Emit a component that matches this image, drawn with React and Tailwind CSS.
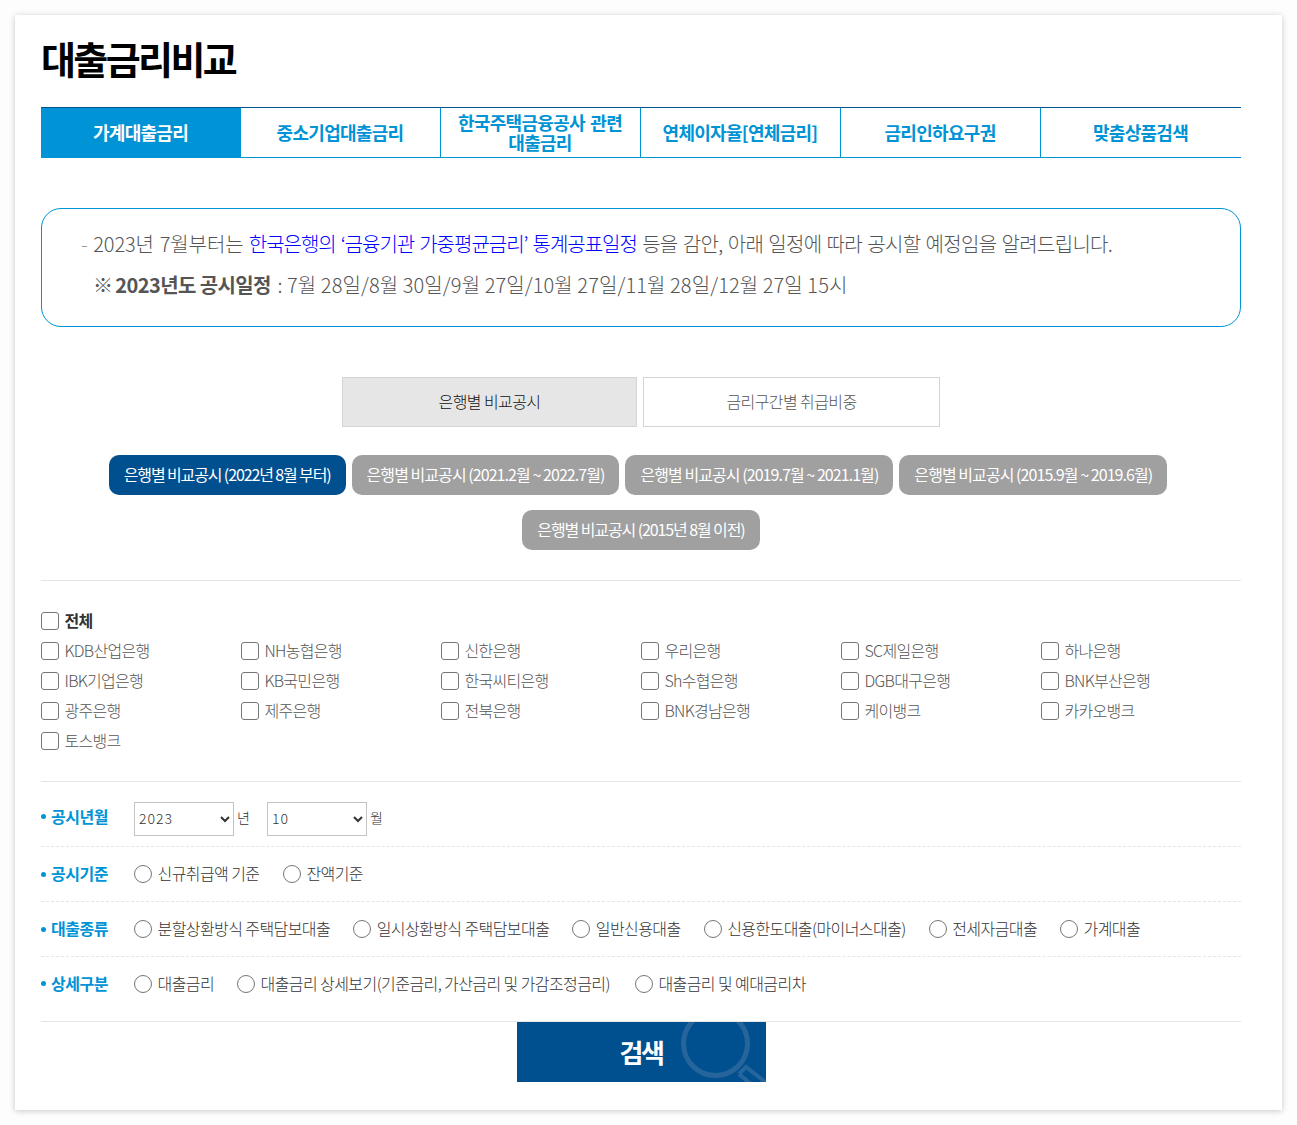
import React from 'react';

const FONT = "font-['Noto_Sans_CJK_KR','Noto_Sans',sans-serif]";

const tabs = ['가계대출금리', '중소기업대출금리', '한국주택금융공사 관련 대출금리', '연체이자율[연체금리]', '금리인하요구권', '맞춤상품검색'];

const pills = [
  { label: '은행별 비교공시 (2022년 8월 부터)', on: true },
  { label: '은행별 비교공시 (2021.2월 ~ 2022.7월)' },
  { label: '은행별 비교공시 (2019.7월 ~ 2021.1월)' },
  { label: '은행별 비교공시 (2015.9월 ~ 2019.6월)' },
];

const banks = [
  'KDB산업은행', 'NH농협은행', '신한은행', '우리은행', 'SC제일은행', '하나은행',
  'IBK기업은행', 'KB국민은행', '한국씨티은행', 'Sh수협은행', 'DGB대구은행', 'BNK부산은행',
  '광주은행', '제주은행', '전북은행', 'BNK경남은행', '케이뱅크', '카카오뱅크',
  '토스뱅크',
];

function Check({ label, bold }) {
  return (
    <label className="flex h-[30px] items-center">
      <input type="checkbox" className="h-[18px] w-[18px] appearance-none rounded-[3px] border border-[#767676] bg-white" />
      <span className={`ml-[5.5px] pb-[2px] text-[16px] tracking-[-0.7px] ${bold ? 'font-bold text-[#333]' : 'font-light text-[#555]'}`}>{label}</span>
    </label>
  );
}

function Radio({ label, gap }) {
  return (
    <label className={`flex items-center ${gap}`}>
      <input type="radio" className="h-[18px] w-[18px] appearance-none rounded-full border border-[#767676] bg-white" />
      <span className="ml-[5.5px] pb-[2px] text-[16px] font-light tracking-[-0.58px] text-[#333]">{label}</span>
    </label>
  );
}

function Row({ title, children, border = true, height, titlePad = 'pb-[2px]' }) {
  return (
    <div className={`flex items-center ${height} ${border ? 'border-b border-dashed border-[#e5e5e5]' : ''}`}>
      <div className={`flex w-[93px] items-center text-[16px] font-bold tracking-[-0.5px] text-[#0093d5] ${titlePad}`}>
        <span className="relative top-[1px] mr-[5px] h-[5px] w-[5px] rounded-full bg-[#0093d5]" />
        {title}
      </div>
      {children}
    </div>
  );
}

export default function App() {
  return (
    <div className={`bg-[#fdfdfd] px-[15px] pb-[15px] pt-[15px] ${FONT}`}>
      <div className="h-[1095px] w-[1267px] bg-white pl-[26px] pr-[41px] shadow-[0_1px_6px_rgba(0,0,0,0.22)]">
        <h1 className="flex h-[92px] items-center pb-[8px] text-[38px] font-bold tracking-[-2.6px] text-black">대출금리비교</h1>

        {/* Tabs */}
        <div className="flex h-[51px] border-t border-b border-t-[#00558f] border-b-[#0093d5]">
          {tabs.map((t, i) => (
            <div
              key={t}
              className={`flex w-[200px] items-center justify-center px-[10px] pb-[2px] pr-[11px] text-center text-[18px] font-bold leading-[20px] tracking-[-0.7px] ${
                i === 0 ? 'bg-[#0093d5] text-white' : 'text-[#0093d5]'
              } ${i > 0 && i < 5 ? 'border-r border-[#0093d5]' : ''}`}
            >
              <span className={i === 2 ? 'w-[175px] [word-spacing:2px]' : ''}>{t}</span>
            </div>
          ))}
        </div>

        {/* Notice */}
        <div className="mt-[50px] h-[119px] rounded-[20px] border border-[#0093d5] pl-[39px] pt-[20px] text-[20px] font-light text-[#555]">
          <p className="h-[30px] leading-[30px] tracking-[-0.7px] [word-spacing:1.5px]">
            <span className="mr-[1px] text-[#999]">- </span>
            <span className="tracking-[-0.1px]">2023년 7월부터는</span>{' '}
            <span className="tracking-[-1px] text-[#0000ff]">한국은행의 ‘금융기관 가중평균금리’ 통계공표일정</span> 등을 감안, 아래 일정에 따라 공시할 예정임을 알려드립니다.
          </p>
          <p className="ml-[12px] mt-[11px] h-[30px] leading-[30px] tracking-[0.1px]">
            <span className="mr-[2px] font-bold tracking-[-0.6px]"><span className="mr-[-1px]">※</span> 2023년도 공시일정</span> : 7월 28일/8월 30일/9월 27일/10월 27일/11월 28일/12월 27일 15시
          </p>
        </div>

        {/* Sub tabs */}
        <div className="mt-[50px] flex h-[50px] justify-center gap-[6px]">
          <div className="flex w-[295px] items-center justify-center border border-[#d5d5d5] bg-[#e6e6e6] pb-[2px] text-[16px] font-light tracking-[-0.6px] text-[#111]">은행별 비교공시</div>
          <div className="flex w-[297px] items-center justify-center border border-[#d5d5d5] bg-white pb-[2px] text-[16px] font-light tracking-[-0.6px] text-[#555]">금리구간별 취급비중</div>
        </div>

        {/* Period pills */}
        <div className="mt-[28px] flex justify-center gap-[6px] pr-[6px]">
          {pills.map((p) => (
            <div
              key={p.label}
              className={`flex h-[40px] items-center rounded-[10px] px-[15px] pb-[3px] text-[16px] text-white ${
                p.on ? 'bg-[#00508f] tracking-[-1.12px]' : 'bg-[#a0a0a0] tracking-[-0.94px]'
              }`}
            >
              {p.label}
            </div>
          ))}
        </div>
        <div className="mt-[15px] flex justify-center">
          <div className="flex h-[40px] items-center rounded-[10px] bg-[#a0a0a0] px-[15px] pb-[3px] text-[16px] tracking-[-1.1px] text-white">은행별 비교공시 (2015년 8월 이전)</div>
        </div>

        <div className="mt-[30px] border-t border-[#e5e5e5] pb-[25px]" />

        {/* Banks */}
        <Check label="전체" bold />
        <div className="grid grid-cols-6">
          {banks.map((b) => <Check key={b} label={b} />)}
        </div>

        <div className="mt-[25px] border-t border-[#e5e5e5]" />

        {/* Search conditions */}
        <Row title="공시년월" height="h-[65px]" titlePad="pt-[3px]">
          <div className="flex items-center pt-[10px] text-[14px] font-light text-[#333]">
            <select defaultValue="2023" className="h-[34px] w-[100px] border border-[#c4c4c4] bg-white pb-[3px] text-[14px] tracking-[1px] text-[#333]">
              <option>2023</option>
            </select>
            <span className="relative bottom-[2px] ml-[3px] w-[30px]">년</span>
            <select defaultValue="10" className="h-[34px] w-[100px] border border-[#c4c4c4] bg-white pb-[3px] text-[14px] tracking-[1px] text-[#333]">
              <option>10</option>
            </select>
            <span className="relative bottom-[2px] ml-[3px]">월</span>
          </div>
        </Row>
        <Row title="공시기준" height="h-[55px]">
          <Radio label="신규취급액 기준" gap="mr-[23.5px]" />
          <Radio label="잔액기준" />
        </Row>
        <Row title="대출종류" height="h-[55px]">
          <Radio label="분할상환방식 주택담보대출" gap="mr-[23px]" />
          <Radio label="일시상환방식 주택담보대출" gap="mr-[23px]" />
          <Radio label="일반신용대출" gap="mr-[23px]" />
          <Radio label="신용한도대출(마이너스대출)" gap="mr-[23px]" />
          <Radio label="전세자금대출" gap="mr-[23px]" />
          <Radio label="가계대출" />
        </Row>
        <Row title="상세구분" border={false} height="h-[64px] pb-[11px]">
          <Radio label="대출금리" gap="mr-[23px]" />
          <Radio label="대출금리 상세보기(기준금리, 가산금리 및 가감조정금리)" gap="mr-[25px]" />
          <Radio label="대출금리 및 예대금리차" />
        </Row>

        <div className="border-t border-[#e5e5e5]" />

        {/* Search button */}
        <div className="flex justify-center pl-[1px]">
          <button className="relative h-[60px] w-[249px] overflow-hidden bg-[#00508f] pb-[2px] pr-[1px] text-[26px] font-bold tracking-[-2.5px] text-white">
            검색
            <svg className="absolute left-0 top-0" width="249" height="60" viewBox="0 0 249 60" fill="none" stroke="#26659b">
              <circle cx="198.5" cy="21.5" r="32" strokeWidth="5" />
              <path d="M222 52 L229 45 L252 63 M222 52 L235 63" strokeWidth="4" />
            </svg>
          </button>
        </div>
      </div>
    </div>
  );
}
